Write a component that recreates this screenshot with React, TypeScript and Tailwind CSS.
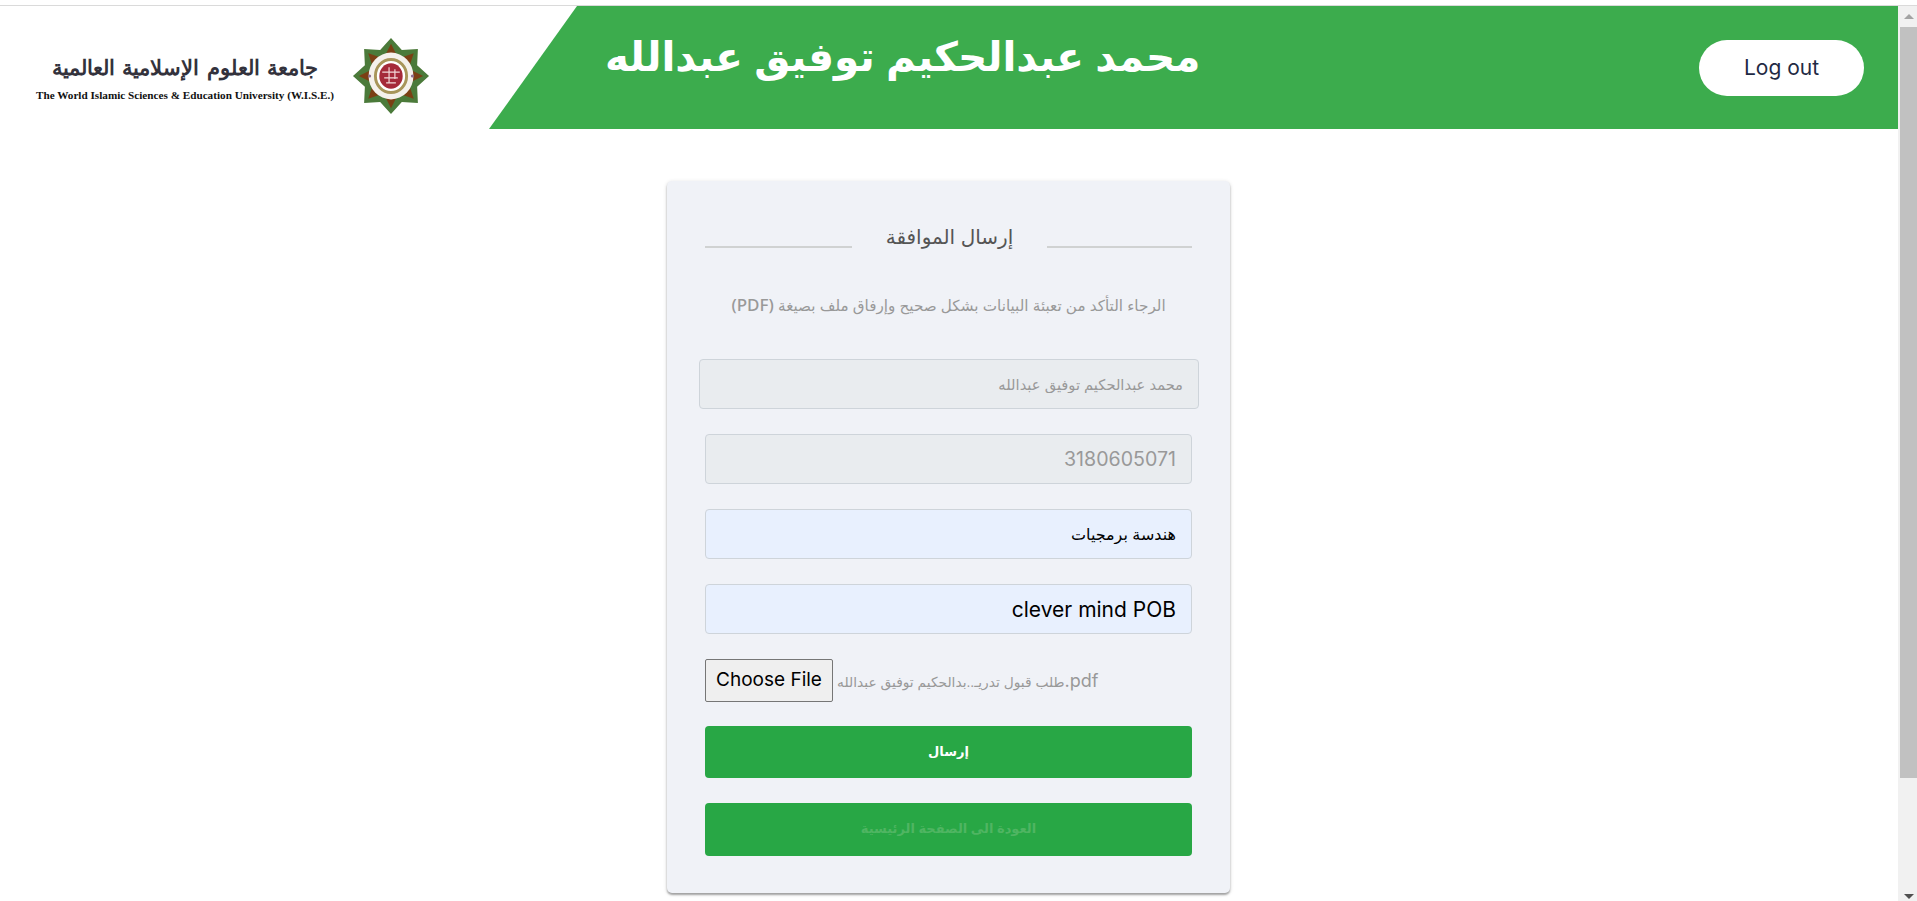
const arabic = { fontFamily: '"Liberation Sans", "DejaVu Sans", "Noto Sans", sans-serif' };
const latin = { fontFamily: 'Inter, sans-serif' };

function Emblem() {
  const tips = [0, 1, 2, 3, 4, 5, 6, 7];
  const star: string[] = [];
  for (let i = 0; i < 16; i++) {
    const r = i % 2 === 0 ? 39 : 29;
    const a = (Math.PI * 2 * i) / 16 - Math.PI / 2;
    star.push(`${40 + r * Math.cos(a)},${40 + r * Math.sin(a)}`);
  }
  return (
    <svg width="78" height="78" viewBox="0 0 80 80" className="shrink-0">
      <polygon points={star.join(' ')} fill="#4b7a3a" />
      {tips.map((i) => (
        <polygon key={i} points="40,7 34,19 46,19" fill="#7b3f14" transform={`rotate(${i * 45} 40 40)`} />
      ))}
      <ellipse cx="40" cy="40" rx="23" ry="24" fill="#f5f1ec" />
      <circle cx="18" cy="40" r="1.6" fill="#8d6c8e" />
      <circle cx="62" cy="40" r="1.6" fill="#8d6c8e" />
      <ellipse cx="40" cy="40" rx="16" ry="17" fill="#fff" stroke="#a8955a" strokeWidth="3" />
      <ellipse cx="40" cy="40" rx="12" ry="13" fill="#a52a3a" />
      <path d="M31 36h18M33 42h14M35 47h10M38 31v16M44 33v10" stroke="#f2d9d9" strokeWidth="1.2" fill="none" />
    </svg>
  );
}

function Logo() {
  return (
    <div className="flex w-[489px] shrink-0 items-center pl-[35px] pt-[16px]">
      <div className="flex w-[300px] flex-col items-center">
        <div dir="rtl" className="whitespace-nowrap text-[20.6px] font-bold leading-[36px] text-[#33323c]" style={{ fontFamily: '"DejaVu Serif", "Liberation Serif", serif' }}>
          جامعة العلوم الإسلامية العالمية
        </div>
        <div className="mt-[2px] whitespace-nowrap text-[11.2px] font-bold leading-[14px] text-[#111]" style={{ fontFamily: '"Liberation Serif", serif' }}>
          The World Islamic Sciences &amp; Education University (W.I.S.E.)
        </div>
      </div>
      <div className="ml-[17px]">
        <Emblem />
      </div>
    </div>
  );
}

function Header() {
  return (
    <header className="flex h-[123px] w-full">
      <Logo />
      <div className="flex flex-1 items-center justify-between bg-[#3cac4d] pr-[34px] [clip-path:polygon(88px_0,100%_0,100%_100%,0_100%)]">
        <h1 dir="rtl" className="ml-[116px] mb-[20px] text-[40.6px] font-bold leading-none text-white" style={arabic}>
          محمد عبدالحكيم توفيق عبدالله
        </h1>
        <button type="button" className="flex h-[56px] w-[165px] items-center justify-center rounded-[28px] bg-white text-[21px] text-[#1f2a44]" style={latin}>
          Log out
        </button>
      </div>
    </header>
  );
}

function Field({ value, disabled, wide, size, family }: { value: string; disabled?: boolean; wide?: boolean; size: string; family: string }) {
  return (
    <input
      readOnly
      dir="rtl"
      value={value}
      className={`block h-[50px] rounded-[4px] border border-[#ced4da] px-[15px] outline-none ${wide ? 'ml-[-6px] w-[500px]' : 'w-full'} ${disabled ? 'bg-[#e9ecef] text-[#999]' : 'bg-[#e8f0fe] text-black'} ${size}`}
      style={{ fontFamily: family }}
    />
  );
}

function ApprovalForm() {
  return (
    <div className="flex justify-center pr-[1px] pt-[52px]">
      <form className="w-[563px] rounded-[5px] bg-[#f0f2f7] px-[38px] pb-[37px] pt-[39px] shadow-[0_2px_2px_rgba(0,0,0,0.3),0_1px_4px_rgba(0,0,0,0.15)]">
        <div className="flex h-[28px] items-end justify-between">
          <span className="h-[2px] w-[147px] bg-[#d0d2d2]" />
          <h2 dir="rtl" className="mb-[-6px] text-[20px] leading-[34px] text-[#555]" style={arabic}>إرسال الموافقة</h2>
          <span className="h-[2px] w-[145px] bg-[#d0d2d2]" />
        </div>

        <p dir="rtl" className="mt-[45px] h-[24px] whitespace-nowrap text-center text-[15.2px] leading-[24px] text-[#999]" style={arabic}>
          الرجاء التأكد من تعبئة البيانات بشكل صحيح وإرفاق ملف بصيغة <span className="text-[17px] font-medium" style={{ fontFamily: '"Noto Sans", sans-serif' }}>(PDF)</span>
        </p>

        <div className="mt-[42px]">
          <Field value="محمد عبدالحكيم توفيق عبدالله" disabled wide size="text-[14.7px]" family={arabic.fontFamily} />
        </div>
        <div className="mt-[25px]">
          <Field value="3180605071" disabled size="text-[19.6px]" family={latin.fontFamily} />
        </div>
        <div className="mt-[25px]">
          <Field value="هندسة برمجيات" size="text-[16px]" family={arabic.fontFamily} />
        </div>
        <div className="mt-[25px]">
          <Field value="clever mind POB" size="text-[21px]" family={latin.fontFamily} />
        </div>

        <div className="mt-[25px] flex h-[43px] items-center">
          <button type="button" className="h-[43px] w-[128px] rounded-[2px] border border-[#767676] bg-[#efefef] text-[19px] text-black" style={latin}>
            Choose File
          </button>
          <span className="ml-[4px] whitespace-nowrap text-[13.8px] text-[#999]" style={arabic}>
            طلب قبول تدريـ..بدالحكيم توفيق عبدالله<span className="text-[18px]" style={latin}>.pdf</span>
          </span>
        </div>

        <button type="button" dir="rtl" className="mt-[24px] block h-[52px] w-full rounded-[4px] bg-[#28a745] text-[13px] font-bold text-white" style={arabic}>
          إرسال
        </button>
        <button type="button" dir="rtl" className="mt-[25px] block h-[53px] w-full rounded-[4px] bg-[#28a745] pb-[2px] text-[13px] font-bold text-[#4fb562]" style={arabic}>
          العودة الى الصفحة الرئيسية
        </button>
      </form>
    </div>
  );
}

function Scrollbar() {
  return (
    <aside className="flex w-[19px] shrink-0 flex-col items-end bg-[#f1f1f1]">
      <div className="flex h-[21px] w-[17px] items-center justify-center">
        <span className="h-0 w-0 border-x-[5px] border-b-[5px] border-x-transparent border-b-[#a3a3a3]" />
      </div>
      <div className="h-[751px] w-[17px] bg-[#c1c1c1]" />
      <div className="flex w-[17px] flex-1 items-end justify-center pb-[2px]">
        <span className="h-0 w-0 border-x-[5px] border-t-[5px] border-x-transparent border-t-[#505050]" />
      </div>
    </aside>
  );
}

export default function App() {
  return (
    <div className="flex h-[901px] w-full flex-col overflow-hidden bg-white" style={latin}>
      <div className="h-[6px] shrink-0 border-b border-[#dadada] bg-white" />
      <div className="flex min-h-0 flex-1">
        <main className="min-w-0 flex-1">
          <Header />
          <ApprovalForm />
        </main>
        <Scrollbar />
      </div>
    </div>
  );
}
